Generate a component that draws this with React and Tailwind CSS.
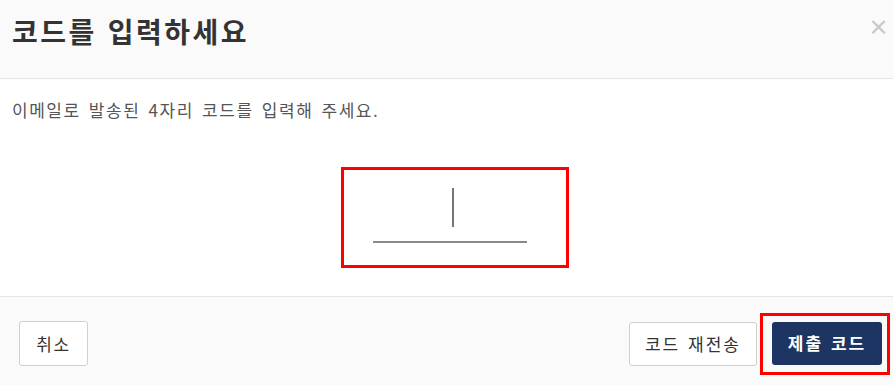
import React from "react";

const font = { fontFamily: '"Noto Sans CJK KR", "Noto Sans", sans-serif' };

export default function App() {
  return (
    <div className="w-full h-[385px] flex flex-col bg-white" style={font}>
      {/* header */}
      <div className="h-[79px] shrink-0 bg-[#fafafa] border-b border-[#e5e5e5] flex items-start justify-between pl-3 pr-[4px]">
        <h1 className="mt-[17px] text-[28px] font-semibold text-[#333] leading-none tracking-[2.5px] [word-spacing:2px]">
          코드를 입력하세요
        </h1>
        <button className="mt-[16px] text-[21px] font-bold text-[#c8c8c8] leading-none">×</button>
      </div>

      {/* body */}
      <div className="flex-1 px-3 pt-[19px]">
        <p className="text-[17px] leading-6 text-[#555] tracking-[1.5px] [word-spacing:3px]">
          이메일로 발송된 4자리 코드를 입력해 주세요.
        </p>
        <div className="mt-[45px] ml-[329px] w-[228px] h-[101px] border-[3px] border-[#ff0000] pt-[18px] pl-[29px]">
          <div className="w-[154px] h-[55px] border-b-2 border-[#8a8a8a] flex justify-center">
            <div className="w-[2px] h-[39px] bg-[#777] ml-[6px]" />
          </div>
        </div>
      </div>

      {/* footer */}
      <div className="h-[89px] shrink-0 bg-[#fafafa] border-t border-[#e5e5e5] flex items-center justify-between pl-[19px] pr-[3px] pt-[5px]">
        <button className="w-[69px] h-[45px] bg-white border border-[#d0d0d0] rounded-[3px] text-[17px] text-[#333] tracking-[1.5px]">
          취소
        </button>
        <div className="flex items-center gap-[3px]">
          <button className="w-[128px] h-[44px] bg-white border border-[#d0d0d0] rounded-[3px] text-[17px] text-[#333] tracking-[2px] [word-spacing:2px]">
            코드 재전송
          </button>
          <div className="border-[3px] border-[#ff0000] pl-[9px] pr-[5px] pt-[6px] pb-[7px]">
            <button className="w-[110px] h-[43px] bg-[#1d3562] rounded-[3px] text-[17px] font-semibold text-white tracking-[2px] [word-spacing:2px]">
              제출 코드
            </button>
          </div>
        </div>
      </div>
    </div>
  );
}
